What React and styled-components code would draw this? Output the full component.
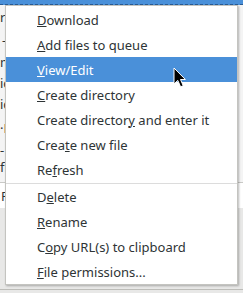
import React from "react";
import styled, { createGlobalStyle } from "styled-components";

const Global = createGlobalStyle`
  html, body { margin: 0; padding: 0; }
  body { overflow: hidden; background: #e8e8e7; font-family: "Noto Sans", "DejaVu Sans", sans-serif; }
`;

const Page = styled.div`
  position: relative;
  width: 243px;
  height: 293px;
  overflow: hidden;
  background: #e8e8e7;
  display: flex;
  flex-direction: column;
`;

const SelectedBand = styled.div`
  height: 4px;
  flex: none;
  background: #4a90d9;
  border-bottom: 1px dashed #2a5c94;
`;

const ListArea = styled.div`
  flex: none;
  height: 177px;
  background: #f4f4f4;
  display: flex;
  flex-direction: column;
  border-bottom: 1px solid #c9c9c6;
`;

const BgRow = styled.div`
  height: ${(p) => p.h}px;
  flex: none;
  display: flex;
  align-items: center;
  font-size: 13px;
  color: #2e3436;
  white-space: nowrap;
  overflow: hidden;
  padding-left: ${(p) => p.indent || 0}px;
`;

const WhiteRow = styled.div`
  flex: none;
  height: 25px;
  background: #ffffff;
  display: flex;
  align-items: center;
  font-size: 13px;
  color: #2e3436;
  padding-left: 1px;
`;

const Filler = styled.div`
  flex: 1;
  border-bottom: 1px solid #bdbdb9;
  margin-bottom: 3px;
`;

const Menu = styled.div`
  position: absolute;
  left: 5px;
  top: 5px;
  width: 231px;
  background: #ffffff;
  border: 1px solid #c4c4c0;
  box-shadow: 1px 1px 2px rgba(0, 0, 0, 0.28);
  padding: 1px 0 0;
  display: flex;
  flex-direction: column;
`;

const Item = styled.div`
  height: 25px;
  display: flex;
  align-items: center;
  padding-left: 31px;
  font-size: 13px;
  color: ${(p) => (p.active ? "#ffffff" : "#2e3436")};
  background: ${(p) => (p.active ? "#4a90d9" : "transparent")};
  white-space: nowrap;
`;

const Mnemonic = styled.span`
  text-decoration: underline;
  text-decoration-thickness: 1px;
  text-underline-offset: 1px;
`;

const Separator = styled.div`
  height: 1px;
  margin: 1px 0 0;
  background: #dcdcdc;
`;

const Cursor = styled.svg`
  position: absolute;
  left: 173px;
  top: 67px;
`;

const items = [
  { label: "Download", m: 0 },
  { label: "Add files to queue", m: 0 },
  { label: "View/Edit", m: 0, active: true },
  { label: "Create directory", m: 0 },
  { label: "Create directory and enter it", m: 15 },
  { label: "Create new file", m: 4 },
  { label: "Refresh", m: 2 },
  { sep: true },
  { label: "Delete", m: 1 },
  { label: "Rename", m: 0 },
  { label: "Copy URL(s) to clipboard", m: 1 },
  { label: "File permissions...", m: 0 },
];

const bgRows = [
  { h: 24, t: "ra", i: 0 },
  { h: 22, t: "-", i: 2 },
  { h: 22, t: "m", i: 0 },
  { h: 20, t: "ic", i: 0 },
  { h: 22, t: "ic", i: 0 },
  { h: 26, t: "·F", i: 0 },
  { h: 17, t: "-", i: 0 },
  { h: 17, t: "fi", i: 0 },
];

function Label({ label, m }) {
  return (
    <span>
      {label.slice(0, m)}
      <Mnemonic>{label[m]}</Mnemonic>
      {label.slice(m + 1)}
    </span>
  );
}

export default function App() {
  return (
    <>
      <Global />
      <Page>
        <SelectedBand />
        <ListArea>
          {bgRows.map((r, i) => (
            <BgRow key={i} h={r.h} indent={r.i}>
              {r.t}
            </BgRow>
          ))}
        </ListArea>
        <WhiteRow>P</WhiteRow>
        <Filler />
        <Menu>
          {items.map((it, i) =>
            it.sep ? (
              <Separator key={i} />
            ) : (
              <Item key={i} active={it.active}>
                <Label label={it.label} m={it.m} />
              </Item>
            )
          )}
        </Menu>
        <Cursor width="14" height="22" viewBox="0 0 14 22">
          <path
            d="M1 1 L1 17 L4.8 13.4 L7.6 19.8 L10.2 18.7 L7.5 12.5 L12.4 12.5 Z"
            fill="#000"
            stroke="#fff"
            strokeWidth="1"
            strokeLinejoin="round"
          />
        </Cursor>
      </Page>
    </>
  );
}
